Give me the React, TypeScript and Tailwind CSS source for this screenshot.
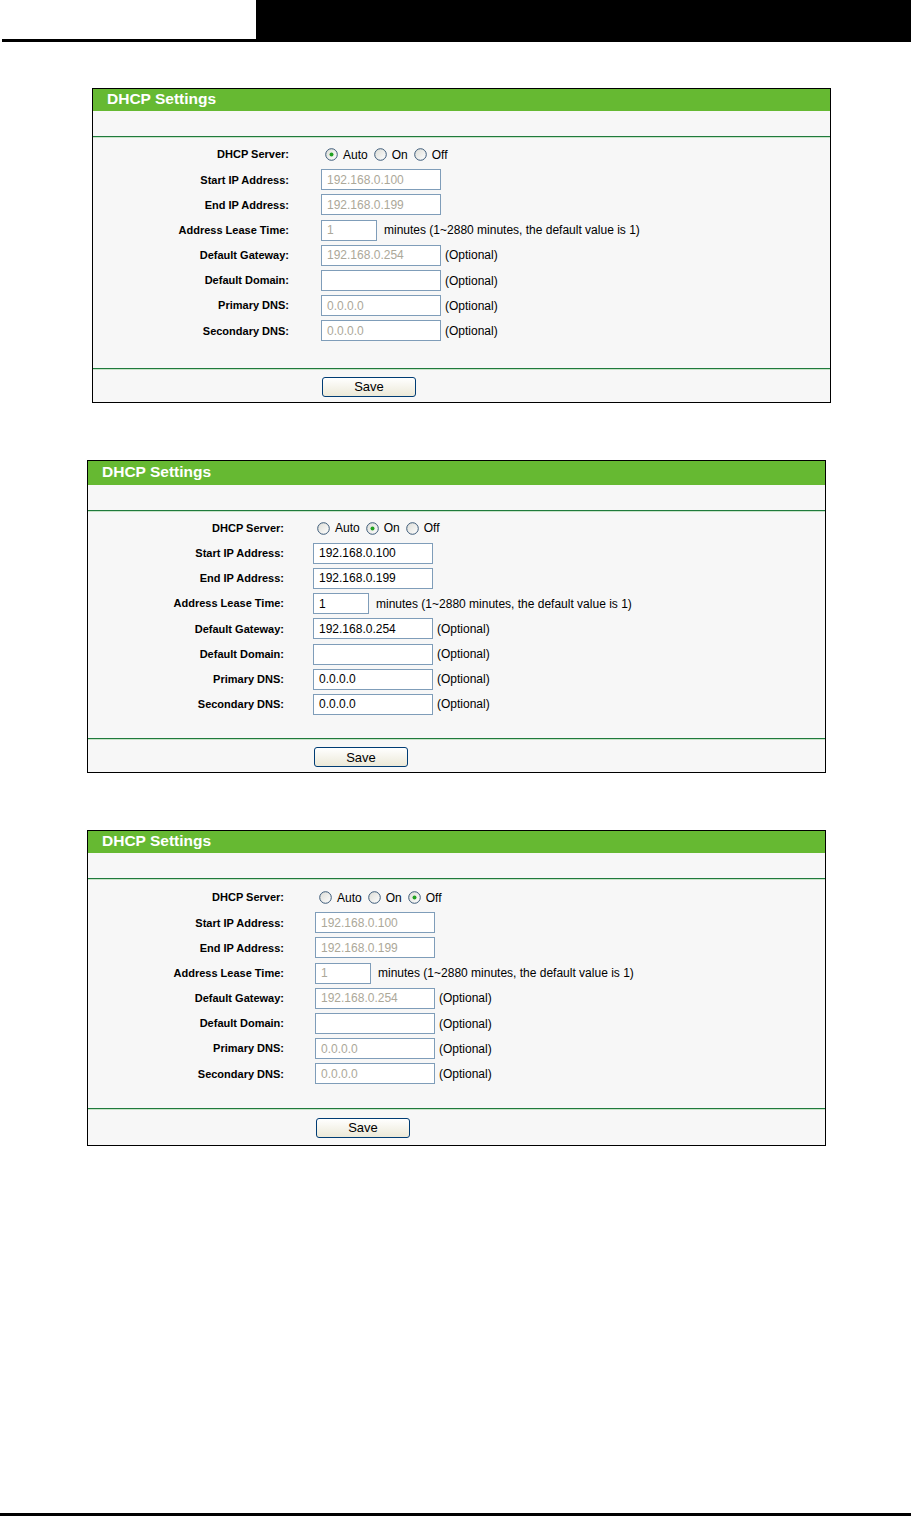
import React from "react";

type Mode = "auto" | "on" | "off";

function Radio({ checked }: { checked: boolean }) {
  return (
    <svg width="13" height="13" viewBox="0 0 13 13" className="shrink-0">
      <defs>
        <linearGradient id="rg" x1="0" y1="0" x2="1" y2="1">
          <stop offset="0" stopColor="#dcdcd6" />
          <stop offset="1" stopColor="#ffffff" />
        </linearGradient>
      </defs>
      <circle cx="6.5" cy="6.5" r="5.8" fill="url(#rg)" stroke="#3c5a78" strokeWidth="1" />
      {checked && <circle cx="6.5" cy="6.5" r="2" fill="#21a121" />}
    </svg>
  );
}

function Field({ value, disabled, w = "w-[120px]" }: { value: string; disabled: boolean; w?: string }) {
  return (
    <div
      className={`${w} h-[21px] border border-[#7f9db9] bg-white flex items-center pl-[5px] text-[12px] leading-none ${
        disabled ? "text-[#aca899]" : "text-black"
      }`}
    >
      {value}
    </div>
  );
}

function Row({ label, gap, children }: { label: string; gap: string; children: React.ReactNode }) {
  return (
    <div className="flex items-center h-[25.2px]">
      <div className="w-[196px] text-right font-bold text-[11px] text-black">{label}</div>
      <div className={`${gap} flex items-center`}>{children}</div>
    </div>
  );
}

function Panel({
  mode,
  className,
  headH,
  gap,
  btnPad,
  body,
  foot,
}: {
  mode: Mode;
  className: string;
  headH: string;
  gap: string;
  btnPad: string;
  body: string;
  foot: string;
}) {
  const dis = mode !== "on";
  return (
    <div className={`w-[739px] border border-black bg-[#f7f7f7] ${className}`}>
      <div className={`${headH} bg-[#66b932] flex items-center pl-[14px] pb-[2px]`}>
        <span className="text-white font-bold text-[15.5px] leading-none">DHCP Settings</span>
      </div>
      <div className="h-[25px]" />
      <div className="h-[1px] bg-[#1f7a3c]" />
      <div className="h-[1px] bg-[#c8e3c8]" />
      <div className={body}>
        <Row label="DHCP Server:" gap={gap}>
          <div className="flex items-center text-[12px] ml-[4px]">
            <Radio checked={mode === "auto"} />
            <span className="ml-[5px]">Auto</span>
            <span className="ml-[6px]">
              <Radio checked={mode === "on"} />
            </span>
            <span className="ml-[5px]">On</span>
            <span className="ml-[6px]">
              <Radio checked={mode === "off"} />
            </span>
            <span className="ml-[5px]">Off</span>
          </div>
        </Row>
        <Row label="Start IP Address:" gap={gap}>
          <Field value="192.168.0.100" disabled={dis} />
        </Row>
        <Row label="End IP Address:" gap={gap}>
          <Field value="192.168.0.199" disabled={dis} />
        </Row>
        <Row label="Address Lease Time:" gap={gap}>
          <Field value="1" disabled={dis} w="w-[56px]" />
          <span className="ml-[7px] text-[12px]">minutes (1~2880 minutes, the default value is 1)</span>
        </Row>
        <Row label="Default Gateway:" gap={gap}>
          <Field value="192.168.0.254" disabled={dis} />
          <span className="ml-[4px] text-[12px]">(Optional)</span>
        </Row>
        <Row label="Default Domain:" gap={gap}>
          <Field value="" disabled={dis} />
          <span className="ml-[4px] text-[12px]">(Optional)</span>
        </Row>
        <Row label="Primary DNS:" gap={gap}>
          <Field value="0.0.0.0" disabled={dis} />
          <span className="ml-[4px] text-[12px]">(Optional)</span>
        </Row>
        <Row label="Secondary DNS:" gap={gap}>
          <Field value="0.0.0.0" disabled={dis} />
          <span className="ml-[4px] text-[12px]">(Optional)</span>
        </Row>
      </div>
      <div className="h-[1px] bg-[#1f7a3c]" />
      <div className="h-[1px] bg-[#c8e3c8]" />
      <div className={`${foot} flex items-start ${btnPad}`}>
        <button className="w-[94px] h-[20px] rounded-[3px] border border-[#003c74] bg-gradient-to-b from-white to-[#ece9d8] text-[13px] leading-none text-black flex items-center justify-center">
          Save
        </button>
      </div>
    </div>
  );
}

export default function App() {
  return (
    <div
      className="w-[913px] h-[1517px] bg-white relative text-black"
      style={{ fontFamily: '"Liberation Sans", Arial, sans-serif' }}
    >
      <div className="flex h-[42px]">
        <div className="w-[256px] h-[42px] flex flex-col justify-end pl-[2px]">
          <div className="h-[3px] bg-black" />
        </div>
        <div className="w-[655px] h-[42px] bg-black" />
      </div>
      <Panel
        mode="auto"
        className="ml-[92px] mt-[46px]"
        headH="h-[22px]"
        gap="ml-[32px]"
        btnPad="pl-[229px]"
        body="pt-[4px] pb-[24px]"
        foot="h-[32px] pt-[7px]"
      />
      <Panel
        mode="on"
        className="ml-[87px] mt-[57px]"
        headH="h-[24px]"
        gap="ml-[29px]"
        btnPad="pl-[226px]"
        body="pt-[4px] pb-[21px]"
        foot="h-[32px] pt-[7px]"
      />
      <Panel
        mode="off"
        className="ml-[87px] mt-[57px]"
        headH="h-[22px]"
        gap="ml-[31px]"
        btnPad="pl-[228px]"
        body="pt-[5px] pb-[21px]"
        foot="h-[35px] pt-[8px]"
      />
      <div className="absolute left-0 top-[1513px] w-[911px] h-[3px] bg-black" />
    </div>
  );
}
